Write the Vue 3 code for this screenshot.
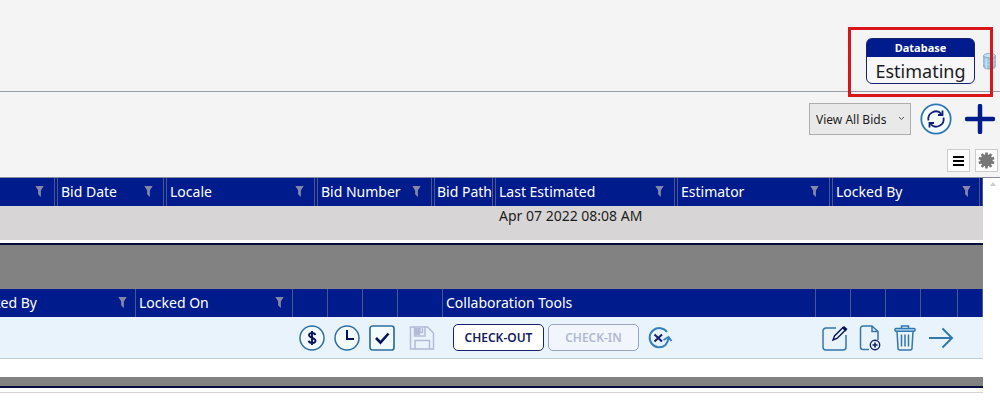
<template>
  <div class="bids">
    <header class="bids__header">
      <div class="database">
        <div class="database__title">Database</div>
        <div class="database__name">Estimating</div>
        <span class="database__highlight" />
      </div>
      <svg class="bids__db-icon" width="15" height="18" viewBox="0 0 15 20" aria-hidden="true">
        <path d="M1 4v12c0 4 13 4 13 0V4z" fill="#8fc3e2" stroke="#82a9c4" />
        <ellipse cx="7.500" cy="4" rx="6.500" ry="2.500" fill="#c3e2f2" stroke="#82a9c4" />
        <path d="M1 8c0 3 13 3 13 0M1 12c0 3 13 3 13 0" fill="none" stroke="#b5d9ee" />
        <path d="M4 7v11" stroke="#c3e2f2" stroke-width="2" />
      </svg>
    </header>

    <div class="toolbar">
      <div class="toolbar__filter">
        <select v-model="view" class="toolbar__select" aria-label="View bids">
          <option>View All Bids</option>
        </select>
        <svg class="toolbar__chevron" width="7" height="5" viewBox="0 0 7 5" aria-hidden="true">
          <path d="M1 1l2.500 2.500L6 1" fill="none" stroke="#555" />
        </svg>
      </div>
      <button type="button" class="icon-button" aria-label="Refresh">
        <svg width="32" height="32" viewBox="0 0 32 32">
          <circle cx="16" cy="16" r="14.700" fill="#f7fcff" stroke="#2f78b5" stroke-width="1.800" />
          <g fill="none" stroke="#10217c" stroke-width="1.800">
            <path d="M8.500 17.500a7.500 7.500 0 0 1 13-6.500M23.500 14.500a7.500 7.500 0 0 1-13 6.500" />
            <path d="M22.500 7.500v4.500H18M9.500 24.500V20H14" />
          </g>
        </svg>
      </button>
      <button type="button" class="icon-button" aria-label="Add bid">
        <svg width="30" height="30" viewBox="0 0 30 30">
          <path d="M15 2v26M2 15h26" stroke="#001b8c" stroke-width="4.500" stroke-linecap="round" />
        </svg>
      </button>
    </div>

    <div class="grid-tools">
      <button type="button" class="grid-tools__button" aria-label="Menu">
        <svg width="11" height="12" viewBox="0 0 11 12">
          <path d="M0 2h11M0 6h11M0 10h11" stroke="#000" stroke-width="2" />
        </svg>
      </button>
      <button type="button" class="grid-tools__button" aria-label="Settings">
        <svg width="17" height="17" viewBox="-9 -9 18 18">
          <circle r="6.500" fill="#777" />
          <path
            d="M0-8.500V8.500M-8.100-2.600L8.100 2.600M-8.100 2.600L8.100-2.600M-5-6.900L5 6.900M5-6.900L-5 6.900"
            stroke="#777"
            stroke-width="2.800"
          />
        </svg>
      </button>
    </div>

    <main class="grids">
      <div class="grids__content">
        <table class="grid grid--bids">
          <colgroup>
            <col v-for="(column, index) in bidColumns" :key="index" :class="column.size">
          </colgroup>
          <thead>
            <tr>
              <th v-for="(column, index) in bidColumns" :key="index">
                <div class="grid__heading">
                  <span>{{ column.label }}</span>
                  <svg v-if="column.filter" width="9" height="11" viewBox="0 0 9 12" aria-hidden="true">
                    <path d="M0 0h9L6 5v7L3 9V5z" fill="#8587a8" />
                  </svg>
                </div>
              </th>
            </tr>
          </thead>
          <tbody>
            <tr>
              <td v-for="(column, index) in bidColumns" :key="index">{{ column.value }}</td>
            </tr>
          </tbody>
        </table>

        <div class="grids__band" />

        <table class="grid grid--estimates">
          <colgroup>
            <col v-for="(column, index) in estimateColumns" :key="index" :class="column.size">
          </colgroup>
          <thead>
            <tr>
              <th v-for="(column, index) in estimateColumns" :key="index">
                <div class="grid__heading" :class="{ 'grid__heading--clipped': column.clipped }">
                  <span>{{ column.label }}</span>
                  <svg v-if="column.filter" width="9" height="11" viewBox="0 0 9 12" aria-hidden="true">
                    <path d="M0 0h9L6 5v7L3 9V5z" fill="#8587a8" />
                  </svg>
                </div>
              </th>
            </tr>
          </thead>
          <tbody>
            <tr>
              <td />
              <td />
              <td>
                <button type="button" class="icon-button" aria-label="Pricing">
                  <svg width="26" height="26" viewBox="0 0 26 26">
                    <circle cx="13" cy="13" r="12" fill="#f3fbff" stroke="#2f6f9f" stroke-width="1.500" />
                    <path
                      d="M16.300 10c-.5-2.700-6.300-2.700-6.300 0 0 3 6.500 2.700 6.500 5.800 0 2.900-6.200 3-6.800 0M13 6v14"
                      fill="none"
                      stroke="#07145c"
                      stroke-width="1.900"
                    />
                  </svg>
                </button>
              </td>
              <td>
                <button type="button" class="icon-button" aria-label="History">
                  <svg width="26" height="26" viewBox="0 0 26 26">
                    <circle cx="13" cy="13" r="12" fill="#f3fbff" stroke="#2f6f9f" stroke-width="1.500" />
                    <path d="M13 5v9h7" fill="none" stroke="#07145c" stroke-width="2" />
                  </svg>
                </button>
              </td>
              <td>
                <button type="button" class="icon-button" aria-label="Select estimate">
                  <svg width="26" height="26" viewBox="0 0 26 26">
                    <rect x="1" y="1" width="24" height="24" rx="2.500" fill="#f3fbff" stroke="#2f6f9f" stroke-width="1.700" />
                    <path d="M7 13l4.500 4.500L19.500 8.500" fill="none" stroke="#07145c" stroke-width="2.600" />
                  </svg>
                </button>
              </td>
              <td>
                <button type="button" class="icon-button" aria-label="Save" disabled>
                  <svg width="26" height="26" viewBox="0 0 26 26" fill="none" stroke="#b3bbd5" stroke-width="1.500">
                    <path d="M1.500 2h17l6 6v16h-23zM5.500 2v9H16V2M6 24v-8.500h14.500V24" />
                    <path d="M6 3h5v7H6z" fill="#b3bbd5" stroke="none" />
                    <path d="M11 3v4.500h2.500V3" />
                  </svg>
                </button>
              </td>
              <td>
                <div class="collaboration">
                  <button type="button" class="pill">CHECK-OUT</button>
                  <button type="button" class="pill" disabled>CHECK-IN</button>
                  <button type="button" class="icon-button collaboration__undo" aria-label="Undo check-out">
                    <svg width="26" height="24" viewBox="0 0 26 24" fill="none">
                      <path d="M20 6a9.600 9.600 0 1 0-1.500 13q2.500-3 3-7" stroke="#3581bd" stroke-width="2" />
                      <path d="M16.500 14l5-3 3 4" stroke="#3581bd" stroke-width="2" />
                      <path d="M7.500 8.500l7.500 7M15 8.500l-7.500 7" stroke="#10206b" stroke-width="2" />
                    </svg>
                  </button>
                </div>
              </td>
              <td>
                <button type="button" class="icon-button" aria-label="Edit">
                  <svg width="26" height="26" viewBox="0 0 26 26" fill="none">
                    <path d="M14 3H4a3 3 0 0 0-3 3v16a3 3 0 0 0 3 3h17a3 3 0 0 0 3-3V10" stroke="#3477ad" stroke-width="1.500" />
                    <path d="M11 15l1.500-4L21 2.500l2.500 2.500L15 13.500z" stroke="#07145c" stroke-width="1.400" />
                    <path d="M20 3l2-2 3.500 3-2 2.500z" fill="#07145c" />
                  </svg>
                </button>
              </td>
              <td>
                <button type="button" class="icon-button" aria-label="Copy estimate">
                  <svg width="22" height="26" viewBox="0 0 22 26" fill="none">
                    <path d="M10 24.500H4a2.500 2.500 0 0 1-2.500-2.500V3.500A2.500 2.500 0 0 1 4 1h9l6 5.500V15M13 1v5.500h6" stroke="#3477ad" stroke-width="1.500" />
                    <circle cx="16" cy="20" r="4.700" stroke="#10206b" stroke-width="1.400" />
                    <path d="M16 17.500v5M13.500 20h5" stroke="#10206b" stroke-width="1.600" />
                  </svg>
                </button>
              </td>
              <td>
                <button type="button" class="icon-button" aria-label="Delete">
                  <svg width="22" height="26" viewBox="0 0 22 26" fill="none" stroke="#3477ad" stroke-width="1.500">
                    <path d="M3 6l1 17q0 2 2 2h10q2 0 2-2l1-17" />
                    <rect x="1" y="3.500" width="20" height="2.700" rx="1" fill="#b8e2fa" />
                    <path d="M7.500 3.500V1h7v2.500M7.500 9.500v12M11 9.500v12M14.500 9.500v12" />
                  </svg>
                </button>
              </td>
              <td>
                <button type="button" class="icon-button" aria-label="Open">
                  <svg width="26" height="26" viewBox="0 0 26 26">
                    <path d="M1 13h23M14.500 3.500L24 13l-9.500 9.500" fill="none" stroke="#3477ad" stroke-width="2" />
                  </svg>
                </button>
              </td>
              <td />
            </tr>
          </tbody>
        </table>
        <div class="grids__footer" />
      </div>
      <div class="grids__scroll">
        <svg width="6" height="4" viewBox="0 0 6 4" aria-hidden="true">
          <path d="M3 0l3 4H0z" fill="#ccc" />
        </svg>
      </div>
    </main>
  </div>
</template>

<script setup>
import { ref } from 'vue'

const view = ref('View All Bids')

const bidColumns = [
  { label: '', filter: true, size: 'col-fluid' },
  { label: 'Bid Date', filter: true, size: 'col-date' },
  { label: 'Locale', filter: true, size: 'col-locale' },
  { label: 'Bid Number', filter: true, size: 'col-number' },
  { label: 'Bid Path', size: 'col-path' },
  { label: 'Last Estimated', value: 'Apr 07 2022 08:08 AM', filter: true, size: 'col-estimated' },
  { label: 'Estimator', filter: true, size: 'col-estimator' },
  { label: 'Locked By', filter: true, size: 'col-locked' },
]

const estimateColumns = [
  { label: 'Locked By', filter: true, clipped: true, size: 'col-fluid' },
  { label: 'Locked On', filter: true, size: 'col-locked-on' },
  { size: 'col-icon' },
  { size: 'col-icon' },
  { size: 'col-icon' },
  { size: 'col-save' },
  { label: 'Collaboration Tools', size: 'col-tools' },
  { size: 'col-icon' },
  { size: 'col-icon' },
  { size: 'col-icon' },
  { size: 'col-open' },
  { size: 'col-end' },
]
</script>

<style>
body {
  margin: 0;
  background: #fff;
}
</style>

<style scoped>
.bids {
  font-family: "Noto Sans", "Open Sans", sans-serif;
  font-size: 14px;
  color: #1c1c1c;
  background: #f4f4f4;
  overflow: hidden;
}

.bids * {
  box-sizing: border-box;
}

.bids svg {
  display: block;
}

.bids__header {
  display: flex;
  justify-content: flex-end;
  gap: 7px;
  padding: 38px 3px 7px 0;
  border-bottom: 1px solid #999da6;
}

.bids__db-icon {
  margin-top: 14px;
}

.database {
  position: relative;
  width: 109px;
  border: 1px solid #17246b;
  border-radius: 6px;
  background: #f7f7fa;
  text-align: center;
}

.database__title {
  border-radius: 4px 4px 0 0;
  background: #001b8c;
  color: #fff;
  font-size: 11px;
  font-weight: 700;
  line-height: 18px;
}

.database__name {
  font-size: 18px;
  line-height: 24px;
  padding-top: 2px;
}

.database__highlight {
  position: absolute;
  inset: -12px -19px -14px;
  z-index: 1;
  border: 3px solid #d9161c;
  pointer-events: none;
}

.toolbar {
  display: flex;
  align-items: center;
  justify-content: flex-end;
  gap: 9px;
  padding: 11px 5px 14px 0;
}

.toolbar__filter {
  position: relative;
}

.toolbar__select {
  display: block;
  width: 102px;
  height: 32px;
  padding: 0 0 0 6px;
  border: 1px solid #adadad;
  border-radius: 0;
  background: #e9e9e9;
  color: #1c1c1c;
  font: inherit;
  font-size: 12px;
  appearance: none;
}

.toolbar__chevron {
  position: absolute;
  right: 6px;
  top: 13px;
  pointer-events: none;
}

.icon-button {
  display: block;
  flex: none;
  padding: 0;
  border: 0;
  background: none;
  cursor: pointer;
}

.toolbar .icon-button + .icon-button {
  margin-left: 4px;
}

.grid-tools {
  display: flex;
  justify-content: flex-end;
  gap: 5px;
  padding: 0 2px 5px 0;
}

.grid-tools__button {
  display: flex;
  align-items: center;
  justify-content: center;
  width: 23px;
  height: 23px;
  padding: 0;
  border: 1px solid #ccc;
  background: #fdfdfd;
}

.grids {
  display: flex;
  background: #fff;
  border-top: 1px solid #888c9c;
}

.grids__content {
  flex: 1;
  min-width: 0;
}

.grids__scroll {
  flex: none;
  width: 17px;
  padding: 4px 0 0 7px;
}

.grid {
  width: 100%;
  table-layout: fixed;
  border-collapse: separate;
  border-spacing: 0;
}

.grid th {
  height: 28px;
  padding: 0;
  background: #001b8c;
  color: #fff;
  font-weight: 400;
  text-align: left;
  white-space: nowrap;
}

.grid--bids th {
  border-right: 4px double #4b568d;
}

.grid--estimates th {
  border-right: 1px solid #4b568d;
}

.grid__heading {
  display: flex;
  align-items: center;
  justify-content: space-between;
  padding: 0 8px 0 3px;
  line-height: 28px;
}

.grid__heading svg {
  margin-bottom: 2px;
}

.grid--bids .grid__heading {
  padding-right: 10px;
}

.grid--bids th:nth-child(5) .grid__heading {
  padding: 0 0 0 2px;
}

.grid--bids th:last-child .grid__heading {
  padding-right: 8px;
}

.grid__heading--clipped {
  padding-left: 0;
}

.grid__heading--clipped span {
  display: flex;
  justify-content: flex-end;
  width: 37px;
  overflow: hidden;
}

.grid td {
  padding: 0;
}

.grid--bids td {
  height: 34px;
  padding-left: 3px;
  background: #d8d5d6;
  line-height: 20px;
  vertical-align: top;
  white-space: nowrap;
}

.grid--estimates td {
  height: 42px;
  padding-left: 2px;
  border-bottom: 1px solid #b9cdda;
  background: #e8f3fc;
}

.grid--estimates td > .icon-button {
  margin: 0 auto;
}

.grids__band {
  height: 46px;
  margin-top: 3px;
  border-top: 2px solid #050b3a;
  background: #828282;
}

.grids__footer {
  height: 16px;
  margin-top: 18px;
  border-bottom: 1px solid #d8d3d3;
  background: linear-gradient(#828282 9px, #050b3a 9px, #050b3a 11px, #fff 11px);
}

.collaboration {
  display: flex;
  align-items: center;
  gap: 4px;
  padding-left: 8px;
}

.collaboration__undo {
  margin-left: 4px;
}

.pill {
  width: 91px;
  height: 27px;
  padding: 0;
  border: 1px solid #17246b;
  border-radius: 5px;
  background: #fff;
  color: #14205f;
  font: inherit;
  font-size: 12px;
  font-weight: 600;
}

.pill:disabled {
  border-color: #9ba4bd;
  background: #f0f6fc;
  color: #b2b8d3;
}

.col-date {
  width: 109px;
}

.col-locale {
  width: 151px;
}

.col-number {
  width: 117px;
}

.col-path {
  width: 61px;
}

.col-estimated {
  width: 182px;
}

.col-estimator {
  width: 155px;
}

.col-locked {
  width: 150px;
}

.col-locked-on {
  width: 157px;
}

.col-icon {
  width: 35px;
}

.col-save {
  width: 45px;
}

.col-tools {
  width: 373px;
}

.col-open {
  width: 37px;
}

.col-end {
  width: 25px;
}
</style>
